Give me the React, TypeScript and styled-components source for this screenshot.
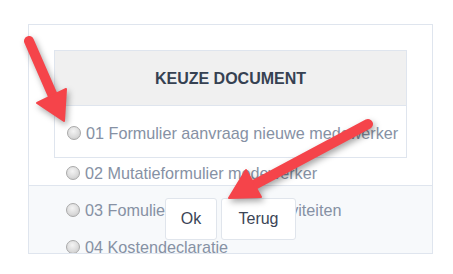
import React from "react";
import styled, { createGlobalStyle } from "styled-components";

const GlobalStyle = createGlobalStyle`
  html, body {
    margin: 0;
    padding: 0;
    background: #ffffff;
    font-family: "Liberation Sans", Arial, sans-serif;
  }
`;

const documents = [
  "01 Formulier aanvraag nieuwe medewerker",
  "02 Mutatieformulier medewerker",
  "03 Fomulier uren / nevenactiviteiten",
  "04 Kostendeclaratie",
];

function App(): JSX.Element {
  const [first, ...rest] = documents;

  return (
    <Page>
      <GlobalStyle />
      <Panel>
        <Body>
          <ChoiceTable>
            <HeaderCell>KEUZE DOCUMENT</HeaderCell>
            <FirstCell>
              <Radio />
              <Label>{first}</Label>
            </FirstCell>
          </ChoiceTable>
          {rest.map((doc) => (
            <Row key={doc}>
              <Radio />
              <Label>{doc}</Label>
            </Row>
          ))}
        </Body>
        <Footer>
          <Button>Ok</Button> <Button $wide>Terug</Button>
        </Footer>
      </Panel>
      <Annotations width="453" height="274" viewBox="0 0 453 274">
        <g fill="#f5444a" stroke="#f5444a" strokeLinecap="round" strokeLinejoin="round">
          <line x1="29" y1="41" x2="53" y2="96" strokeWidth="10" />
          <polygon points="64,121 37,103 66,89" strokeWidth="2" />
          <line x1="368" y1="124" x2="252" y2="186" strokeWidth="10" />
          <polygon points="229,198 261,197 246,170" strokeWidth="2" />
        </g>
      </Annotations>
    </Page>
  );
}

export default App;

const Page = styled.div`
  position: relative;
  width: 453px;
  height: 274px;
  padding-top: 24px;
  box-sizing: border-box;
`;

const Panel = styled.div`
  margin-left: 28px;
  width: 405px;
  height: 230px;
  box-sizing: border-box;
  border: 1px solid #dfe5ee;
  overflow: hidden;
  background: #ffffff;
`;

const Body = styled.div`
  height: 160px;
  box-sizing: border-box;
  padding: 25px 0 0 25px;
`;

const ChoiceTable = styled.div`
  width: 353px;
  box-sizing: border-box;
  border: 1px solid #dfe5ee;
`;

const HeaderCell = styled.div`
  height: 55px;
  display: flex;
  align-items: center;
  justify-content: center;
  background: #f0f0f0;
  border-bottom: 1px solid #dfe5ee;
  color: #364152;
  font-weight: bold;
  font-size: 16px;
  padding-top: 2px;
  box-sizing: border-box;
`;

const FirstCell = styled.div`
  height: 51px;
  box-sizing: border-box;
  display: flex;
  align-items: center;
  padding: 3px 0 0 12px;
`;

const Row = styled.div`
  display: flex;
  align-items: center;
  height: 20px;
  padding: 5px 0 12px 12px;
`;

const Radio = styled.span`
  display: inline-block;
  width: 14px;
  height: 14px;
  margin-right: 5px;
  border-radius: 50%;
  box-sizing: border-box;
  border: 1px solid #a9a9a9;
  background: radial-gradient(circle at 45% 35%, #f4f4f4 0%, #dcdcdc 55%, #c4c4c4 100%);
  flex-shrink: 0;
`;

const Label = styled.span`
  color: #8691a4;
  font-size: 16.2px;
  white-space: nowrap;
  line-height: 20px;
`;

const Footer = styled.div`
  height: 68px;
  box-sizing: border-box;
  border-top: 1px solid #dfe5ee;
  background: #f7f9fb;
  padding-top: 12px;
  text-align: center;
  font-size: 0;
`;

const Button = styled.button<{ $wide?: boolean }>`
  display: inline-block;
  width: ${(p) => (p.$wide ? "75px" : "52px")};
  height: 42px;
  margin: 0 2px;
  background: #ffffff;
  border: 1px solid #e0e5ec;
  border-radius: 3px;
  color: #3b4556;
  font-family: "Liberation Sans", Arial, sans-serif;
  font-size: 16px;
  padding: 0;
`;

const Annotations = styled.svg`
  position: absolute;
  left: 0;
  top: 0;
  pointer-events: none;
  filter: drop-shadow(2px 3px 3px rgba(0, 0, 0, 0.35));
`;
